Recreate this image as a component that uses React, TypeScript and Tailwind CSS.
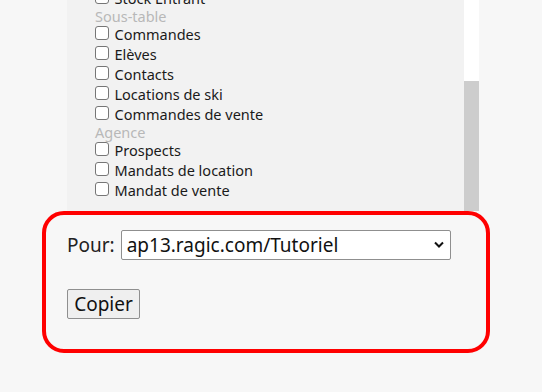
import React from "react";

// lignes de la liste (titre de groupe ou case à cocher)
type Row = { label: string; header?: boolean };

const rows: Row[] = [
  { label: "Stock Entrant" },
  { label: "Sous-table", header: true },
  { label: "Commandes" },
  { label: "Elèves" },
  { label: "Contacts" },
  { label: "Locations de ski" },
  { label: "Commandes de vente" },
  { label: "Agence", header: true },
  { label: "Prospects" },
  { label: "Mandats de location" },
  { label: "Mandat de vente" },
];

const font = { fontFamily: '"Noto Sans", "Open Sans", sans-serif' };

const CheckRow: React.FC<{ label: string }> = ({ label }) => (
  <div className="flex h-[20px] items-center gap-[6px]">
    <span className="mt-[-2px] box-border h-[13.5px] w-[13.5px] shrink-0 rounded-[3px] border border-[#767676] bg-white" />
    <span className="text-[14.5px] leading-[20px] text-[#1a1a1a]">{label}</span>
  </div>
);

const App: React.FC = () => (
  <div className="h-[392px] w-[542px] overflow-hidden bg-[#f7f7f7]" style={font}>
    {/* liste défilante */}
    <div className="ml-[67px] flex h-[211px] w-[412px]">
      <div className="h-full w-[397px] overflow-hidden bg-[#f2f2f2] pl-[28px]">
        <div className="mt-[-12px] flex flex-col">
          {rows.map((r) =>
            r.header ? (
              <div key={r.label} className="h-[16px] text-[14.5px] leading-[16px] text-[#b8b8b8]">
                {r.label}
              </div>
            ) : (
              <CheckRow key={r.label} label={r.label} />
            )
          )}
        </div>
      </div>
      <div className="flex h-full w-[15px] flex-col bg-white">
        <div className="h-[81px]" />
        <div className="flex-1 bg-[#cdcdcd]" />
      </div>
    </div>

    {/* encadré rouge */}
    <div className="ml-[42px] box-border h-[142px] w-[448px] rounded-[22px] border-4 border-[#ff0000] pl-[21px] pt-[15px]">
      <div className="flex h-[30px] items-center gap-[6px]">
        <span className="text-[19px] leading-[30px] text-[#222]">Pour:</span>
        <div className="relative box-border flex h-[30px] w-[330px] items-center rounded-[2px] border border-[#8f8f8f] bg-white pl-[5px]">
          <span className="text-[19px] leading-[28px] text-[#111]">ap13.ragic.com/Tutoriel</span>
          <svg
            className="absolute right-[6px] top-[10px]"
            width="10"
            height="7"
            viewBox="0 0 10 7"
            fill="none"
            stroke="#111"
            strokeWidth="2"
          >
            <path d="M1 1.5 L5 5.5 L9 1.5" />
          </svg>
        </div>
      </div>
      <button className="mt-[29px] box-border h-[30px] w-[73px] rounded-[2px] border border-[#8f8f8f] bg-[#efefef] text-[19px] leading-[28px] text-[#111]">
        Copier
      </button>
    </div>
  </div>
);

export default App;
